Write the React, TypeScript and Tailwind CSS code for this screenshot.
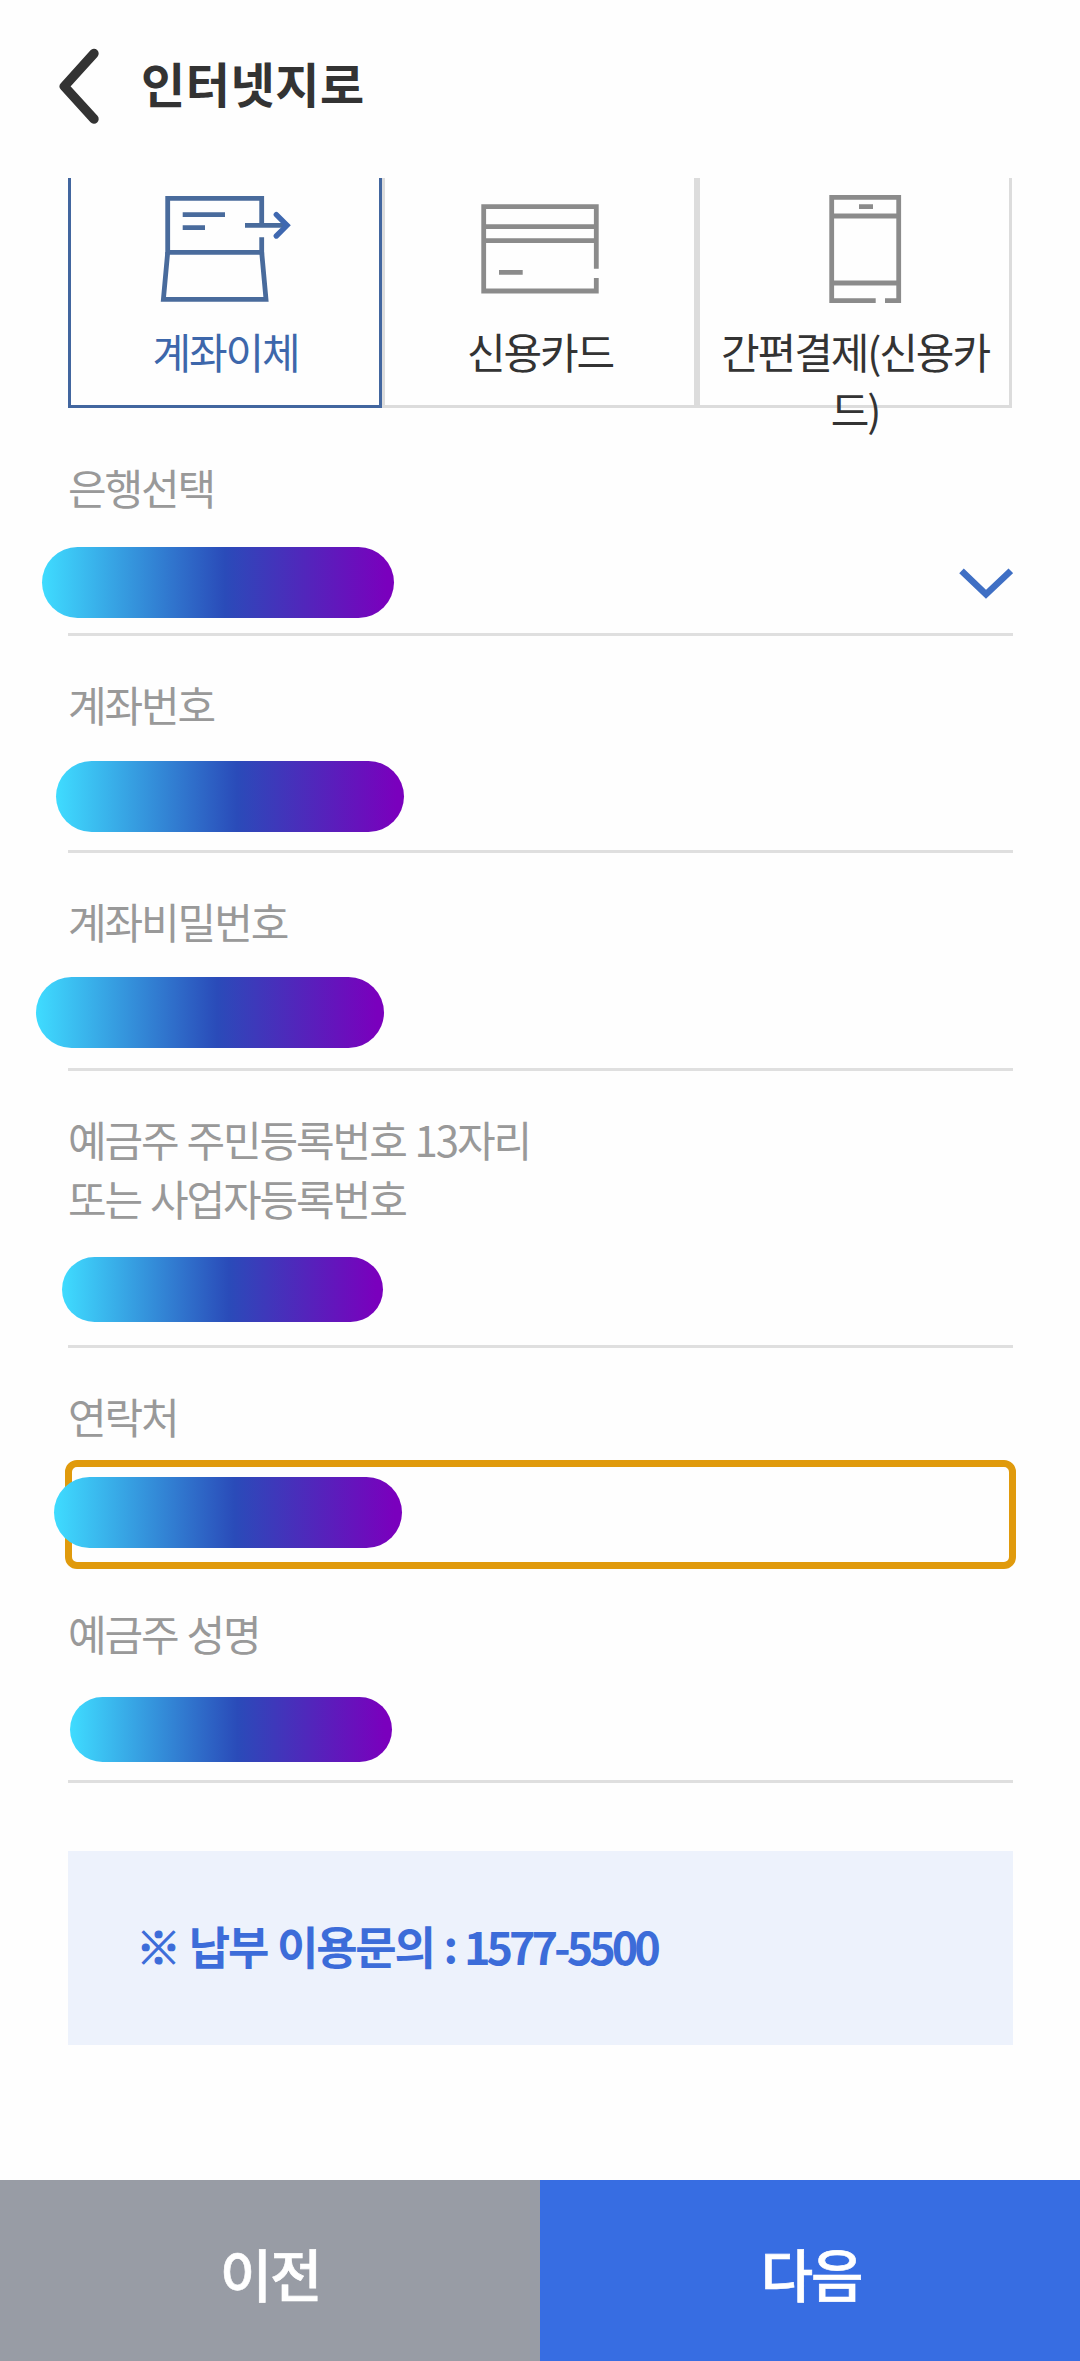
import type { ReactNode } from "react";

function TransferIcon() {
  return (
    <svg className="ml-[1px] h-[112px] w-[132px] shrink-0" viewBox="160 192 132 112" fill="none" stroke="#496b9c" strokeWidth="4.8">
      <path d="M261.7 223V198.3H167.7V252.3H261.7V237.3" />
      <path d="M167.7 252.3L163.4 299.3H266L261.7 252.3" />
      <path d="M182.7 214.7H225M182.7 227.7H205" />
      <path d="M245 225.3H286" />
      <path d="M276.3 214.6L287 225.3L276.3 236" stroke="#3f68b0" strokeWidth="5.4" strokeLinecap="round" />
    </svg>
  );
}

function CardIcon() {
  return (
    <svg className="h-[112px] w-[120px] shrink-0" viewBox="480 192 120 112" fill="none" stroke="#8b8b8b" strokeWidth="4.8">
      <path d="M596.3 268.7V206.7H483.7V291H596.3V278" />
      <path d="M483.7 226.7H596.3M483.7 240.7H596.3M499 272.4H522.7" />
    </svg>
  );
}

function PhoneIcon() {
  return (
    <svg className="ml-[20px] h-[112px] w-[76px] shrink-0" viewBox="827 192 76 112" fill="none" stroke="#8b8b8b" strokeWidth="4.8">
      <path d="M875.7 300.7H831.7V197.3H898.7V300.7H885" />
      <path d="M831.7 216H898.7M831.7 283H898.7M859 206.7H873" />
    </svg>
  );
}

function Tab({ children, label, className }: { children: ReactNode; label: string; className: string }) {
  return (
    <button
      className={`flex h-[230px] flex-col items-center border-x-[3px] border-b-[3px] px-[18px] pt-[14px] ${className}`}
    >
      {children}
      <span className="mt-[18px] block w-full pl-[1px] text-center text-[42px] leading-[58px] tracking-[-0.05em] break-all">
        {label}
      </span>
    </button>
  );
}

type FieldProps = { label: ReactNode; className: string; pill: string; focused?: boolean; children?: ReactNode };

function Field({ label, className, pill, focused, children }: FieldProps) {
  return (
    <div
      className={`relative flex flex-col justify-between border-b-[3px] pt-[39px] ${
        focused ? "border-transparent" : "border-[#dfdfdf]"
      } ${className}`}
    >
      <label className="text-[42px] leading-[58.8px] tracking-[-0.05em] text-[#999] [word-spacing:1.5px]">{label}</label>
      {children}
      {focused && (
        <div className="absolute top-[112px] left-[-3px] h-[109px] w-[951px] rounded-[12px] border-[7px] border-[#e09a0c]" />
      )}
      <div
        className={`absolute rounded-full bg-[linear-gradient(90deg,#3fdcff_0%,#2a4bb9_52%,#7a00bd_98%)] ${pill}`}
      />
    </div>
  );
}

export default function App() {
  return (
    <div className="flex h-[2361px] w-[1080px] flex-col bg-[#fefefe] font-['Noto_Sans_CJK_KR',sans-serif] text-[#333]">
      <header className="flex h-[178px] items-start pt-[46px] pl-[56px]">
        <svg className="h-[80px] w-[48px]" viewBox="56 46 48 80" fill="none">
          <path
            d="M94 53.5L64.3 86.3L94 119"
            stroke="#333"
            strokeWidth="9.4"
            strokeLinecap="round"
            strokeLinejoin="round"
          />
        </svg>
        <h1 className="mt-[1px] ml-[37px] text-[48px] leading-[70px] font-bold tracking-[0.6px]">인터넷지로</h1>
      </header>

      <main className="flex w-[1013px] flex-1 flex-col pl-[68px]">
        <nav className="grid w-[944px] grid-cols-[314px_315px_315px]">
          <Tab label="계좌이체" className="border-[#42669f] text-[#3d67ab]">
            <TransferIcon />
          </Tab>
          <Tab label="신용카드" className="border-[#dcdcdc]">
            <CardIcon />
          </Tab>
          <Tab label="간편결제(신용카드)" className="border-[#dcdcdc]">
            <PhoneIcon />
          </Tab>
        </nav>

        <form className="mt-[11px] flex flex-col">
          <Field label="은행선택" className="h-[217px]" pill="top-[128px] left-[-26px] h-[71px] w-[352px]">
            <svg className="mb-[32px] h-[34px] w-[56px] self-end" viewBox="957 567 56 34" fill="none">
              <path d="M961.5 570.8L986 594.3L1010.8 570.8" stroke="#3f6fc4" strokeWidth="6.6" />
            </svg>
          </Field>
          <Field label="계좌번호" className="h-[217px]" pill="top-[125px] left-[-12px] h-[71px] w-[348px]" />
          <Field label="계좌비밀번호" className="h-[218px]" pill="top-[124px] left-[-32px] h-[71px] w-[348px]" />
          <Field
            label={
              <>
                예금주 주민등록번호 13자리
                <br />
                또는 사업자등록번호
              </>
            }
            className="h-[277px]"
            pill="top-[186px] left-[-6px] h-[65px] w-[321px]"
          />
          <Field label="연락처" className="h-[217px]" pill="top-[129px] left-[-14px] h-[71px] w-[348px]" focused />
          <Field label="예금주 성명" className="h-[218px]" pill="top-[132px] left-[2px] h-[65px] w-[322px]" />
        </form>

        <p className="mt-[68px] h-[194px] bg-[#edf2fc] pt-[62px] pl-[68px] text-[45px] leading-[65px] font-bold tracking-[-0.05em] whitespace-pre text-[#3c6cd9]">
          <span className="[-webkit-text-stroke:1.2px_#3c6cd9]">※</span>
          <span className="[word-spacing:2px]"> 납부 이용문의 </span>
          <span className="inline-block -translate-y-0.5">:</span>
          <span className="tracking-[-0.09em] [word-spacing:2px]"> 1577-5500</span>
        </p>
      </main>

      <footer className="grid h-[181px] grid-cols-2 text-[57px] font-medium tracking-[-0.04em] text-white [-webkit-text-stroke:0.6px_white]">
        <button className="bg-[#989ca5] pt-[5px]">이전</button>
        <button className="bg-[#376de2] pt-[5px] pl-[2px]">다음</button>
      </footer>
    </div>
  );
}
